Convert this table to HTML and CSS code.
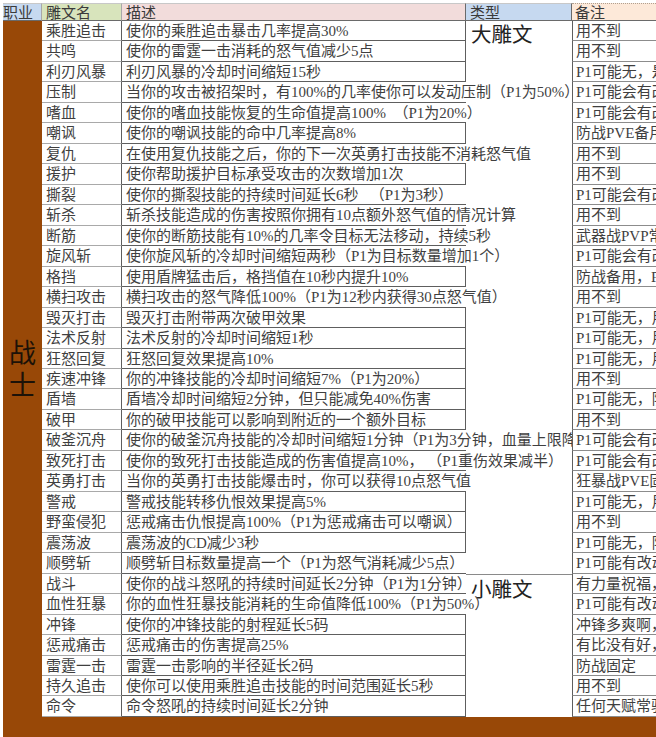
FILE: index.html
```html
<!DOCTYPE html>
<html lang="zh-CN">
<head>
<meta charset="utf-8">
<title>战士雕文</title>
<link rel="stylesheet" href="styles.css">
</head>
<body>
<div class="sheet">
  <div class="h h-job">职业</div>
  <div class="h h-name">雕文名</div>
  <div class="h h-desc">描述</div>
  <div class="h h-type">类型</div>
  <div class="h h-note">备注</div>

  <div class="job">战<br>士</div>
  <div class="type type-big">大雕文</div>
  <div class="type type-small">小雕文</div>

  <div class="c nm">乘胜追击</div><div class="c d box">使你的乘胜追击暴击几率提高30%</div><div class="c n">用不到</div>
  <div class="c nm">共鸣</div><div class="c d box">使你的雷霆一击消耗的怒气值减少5点</div><div class="c n">用不到</div>
  <div class="c nm">利刃风暴</div><div class="c d box">利刃风暴的冷却时间缩短15秒</div><div class="c n">P1可能无，是否</div>
  <div class="c nm">压制</div><div class="c d">当你的攻击被招架时，有100%的几率使你可以发动压制（P1为50%）</div><div class="c n">P1可能会有改动</div>
  <div class="c nm">嗜血</div><div class="c d">使你的嗜血技能恢复的生命值提高100%&nbsp;&nbsp;（P1为20%）</div><div class="c n">P1可能会有改动</div>
  <div class="c nm">嘲讽</div><div class="c d box">使你的嘲讽技能的命中几率提高8%</div><div class="c n">防战PVE备用</div>
  <div class="c nm">复仇</div><div class="c d">在使用复仇技能之后，你的下一次英勇打击技能不消耗怒气值</div><div class="c n">用不到</div>
  <div class="c nm">援护</div><div class="c d box">使你帮助援护目标承受攻击的次数增加1次</div><div class="c n">用不到</div>
  <div class="c nm">撕裂</div><div class="c d">使你的撕裂技能的持续时间延长6秒&nbsp;&nbsp;&nbsp;（P1为3秒）</div><div class="c n">P1可能会有改动</div>
  <div class="c nm">斩杀</div><div class="c d">斩杀技能造成的伤害按照你拥有10点额外怒气值的情况计算</div><div class="c n">用不到</div>
  <div class="c nm">断筋</div><div class="c d">使你的断筋技能有10%的几率令目标无法移动，持续5秒</div><div class="c n">武器战PVP常用</div>
  <div class="c nm">旋风斩</div><div class="c d">使你旋风斩的冷却时间缩短两秒（P1为目标数量增加1个）</div><div class="c n">P1可能会有改动</div>
  <div class="c nm">格挡</div><div class="c d box">使用盾牌猛击后，格挡值在10秒内提升10%</div><div class="c n">防战备用，P1</div>
  <div class="c nm">横扫攻击</div><div class="c d">横扫攻击的怒气降低100%（P1为12秒内获得30点怒气值）</div><div class="c n">用不到</div>
  <div class="c nm">毁灭打击</div><div class="c d box">毁灭打击附带两次破甲效果</div><div class="c n">P1可能无，用</div>
  <div class="c nm">法术反射</div><div class="c d box">法术反射的冷却时间缩短1秒</div><div class="c n">P1可能无，用</div>
  <div class="c nm">狂怒回复</div><div class="c d box">狂怒回复效果提高10%</div><div class="c n">P1可能无，用</div>
  <div class="c nm">疾速冲锋</div><div class="c d box">你的冲锋技能的冷却时间缩短7%（P1为20%）</div><div class="c n">用不到</div>
  <div class="c nm">盾墙</div><div class="c d box">盾墙冷却时间缩短2分钟，但只能减免40%伤害</div><div class="c n">P1可能无，防</div>
  <div class="c nm">破甲</div><div class="c d box">你的破甲技能可以影响到附近的一个额外目标</div><div class="c n">用不到</div>
  <div class="c nm">破釜沉舟</div><div class="c d">使你的破釜沉舟技能的冷却时间缩短1分钟（P1为3分钟，血量上限降低）</div><div class="c n">P1可能会有改动</div>
  <div class="c nm">致死打击</div><div class="c d">使你的致死打击技能造成的伤害值提高10%，&nbsp;（P1重伤效果减半）</div><div class="c n">P1可能会有改动</div>
  <div class="c nm">英勇打击</div><div class="c d">当你的英勇打击技能爆击时，你可以获得10点怒气值</div><div class="c n">狂暴战PVE固定</div>
  <div class="c nm">警戒</div><div class="c d box">警戒技能转移仇恨效果提高5%</div><div class="c n">P1可能无，用</div>
  <div class="c nm">野蛮侵犯</div><div class="c d box">惩戒痛击仇恨提高100%（P1为惩戒痛击可以嘲讽）</div><div class="c n">用不到</div>
  <div class="c nm">震荡波</div><div class="c d box">震荡波的CD减少3秒</div><div class="c n">P1可能无，防</div>
  <div class="c nm">顺劈斩</div><div class="c d">顺劈斩目标数量提高一个（P1为怒气消耗减少5点）</div><div class="c n">P1可能有改动</div>
  <div class="c nm">战斗</div><div class="c d clip">使你的战斗怒吼的持续时间延长2分钟（P1为1分钟）</div><div class="c n">有力量祝福，</div>
  <div class="c nm">血性狂暴</div><div class="c d">你的血性狂暴技能消耗的生命值降低100%（P1为50%）</div><div class="c n">P1可能有改动</div>
  <div class="c nm">冲锋</div><div class="c d box">使你的冲锋技能的射程延长5码</div><div class="c n">冲锋多爽啊，</div>
  <div class="c nm">惩戒痛击</div><div class="c d box">惩戒痛击的伤害提高25%</div><div class="c n">有比没有好，</div>
  <div class="c nm">雷霆一击</div><div class="c d box">雷霆一击影响的半径延长2码</div><div class="c n">防战固定</div>
  <div class="c nm">持久追击</div><div class="c d box">使你可以使用乘胜追击技能的时间范围延长5秒</div><div class="c n">用不到</div>
  <div class="c nm">命令</div><div class="c d box">命令怒吼的持续时间延长2分钟</div><div class="c n">任何天赋常驻</div>

  <div class="foot"></div>
</div>
</body>
</html>
```

FILE: styles.css
```css
html, body {
  margin: 0;
  padding: 0;
  background: #ffffff;
  overflow: hidden;
}

body {
  width: 656px;
  height: 737px;
}

.sheet {
  display: grid;
  grid-template-columns: 39px 80px 344px 106px 84px;
  grid-template-rows: 18px repeat(34, 20.47px) 20px;
  margin: 3px 0 0 3px;
  width: 653px;
  overflow: hidden;
  font-family: "Liberation Serif", "Noto Sans CJK SC", serif;
  font-size: 15px;
  color: #3f3f3f;
}

/* header row */
.h {
  box-sizing: border-box;
  white-space: nowrap;
  line-height: 17px;
  padding: 1px 0 0 4px;
  border-right: 1px solid #a8a8a8;
  border-bottom: 1px solid #6a6a6a;
  border-top: 1px solid #c8c8c8;
  color: #3a3a3a;
  overflow: hidden;
}

.h-job {
  background: #c6d9f0;
  padding-left: 0;
}

.h-name {
  background: #d8e4bc;
}

.h-desc {
  background: #f2dcdb;
  border-right-color: #6a6a6a;
}

.h-type {
  background: #c6d9f0;
  border-right-color: #6a6a6a;
}

.h-note {
  background: #fde9d9;
  padding-left: 3px;
  border-right: none;
  border-top: 1px dotted #b0a090;
}

/* merged cells */
.job {
  grid-column: 1;
  grid-row: 2 / span 34;
  background: #984807;
  display: flex;
  align-items: center;
  justify-content: center;
  font-family: "Noto Sans CJK SC", sans-serif;
  font-size: 27px;
  line-height: 32px;
  color: #1c1208;
  text-align: center;
  padding-bottom: 2px;
}

.type {
  grid-column: 4;
  background: #ffffff;
  font-family: "Noto Sans CJK SC", sans-serif;
  font-size: 20.5px;
  line-height: 24px;
  color: #222222;
  padding-left: 5px;
  box-sizing: border-box;
}

.type-big {
  grid-row: 2 / span 27;
}

.type-small {
  grid-row: 29 / span 7;
  border-top: 1px solid #8a8a8a;
  padding-top: 1px;
}

/* body cells */
.c {
  box-sizing: border-box;
  white-space: nowrap;
  line-height: 19px;
  padding: 1px 0 0 4px;
}

.nm {
  grid-column: 2;
  border-bottom: 1px solid #a9a9a9;
  border-right: 1px solid #5e5e5e;
  background: #ffffff;
}

.d {
  grid-column: 3;
  border-bottom: 1px solid #5e5e5e;
}

.d.box {
  border-right: 1px solid #5e5e5e;
}

.d.clip {
  overflow: hidden;
}

.n {
  grid-column: 5;
  background: #ffffff;
  border-left: 1px solid #5e5e5e;
  border-bottom: 1px solid #8c8c8c;
  padding-left: 3px;
  overflow: hidden;
}

.foot {
  grid-column: 1 / -1;
  background: #984807;
}
```
